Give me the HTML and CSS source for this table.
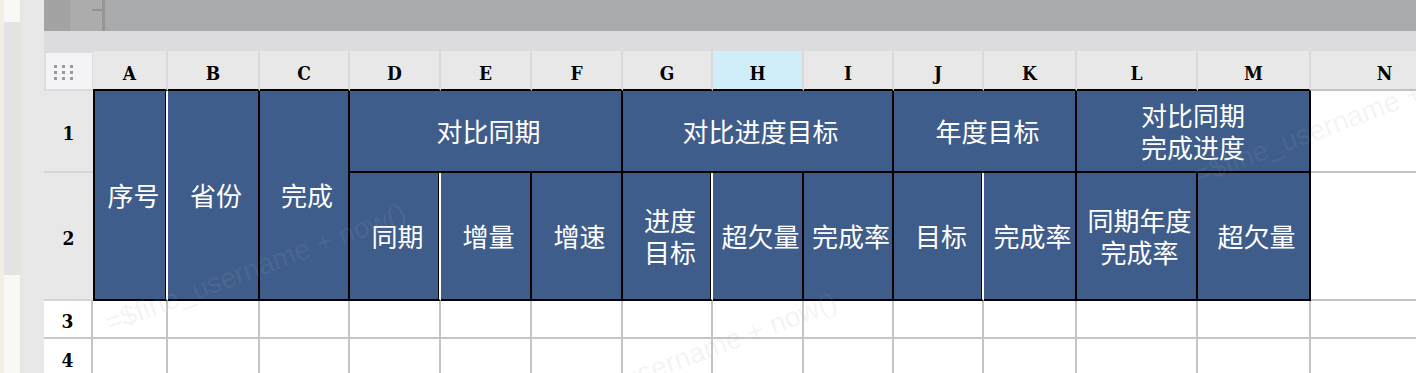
FILE: index.html
```html
<!DOCTYPE html>
<html lang="zh">
<head>
<meta charset="utf-8">
<title>Sheet</title>
<link rel="stylesheet" href="styles.css">
</head>
<body>
<div class="app">
  <div class="lpanel">
    <div class="lp-edge"></div>
    <div class="lp-track"><div class="lp-top"></div><div class="lp-mid"></div><div class="lp-bot"></div></div>
    <div class="lp-edge2"></div>
  </div>
  <div class="gutter"></div>
  <div class="main">
    <div class="topbar">
      <div class="tb-a"></div>
      <div class="tb-b"><span class="tick"></span></div>
      <div class="tb-line"></div>
      <div class="tb-rest"></div>
    </div>
    <div class="band"></div>
    <div class="sheet">
      <div class="grid">
        <!-- column header row -->
        <div class="corner"><div class="corner-in"><svg width="19" height="15" viewBox="0 0 19 15"><g fill="#9a9a9a"><rect x="0" y="0" width="3" height="3"/><rect x="8" y="0" width="3" height="3"/><rect x="16" y="0" width="3" height="3"/><rect x="0" y="6" width="3" height="3"/><rect x="8" y="6" width="3" height="3"/><rect x="16" y="6" width="3" height="3"/><rect x="0" y="12" width="3" height="3"/><rect x="8" y="12" width="3" height="3"/><rect x="16" y="12" width="3" height="3"/></g></svg></div></div>
        <div class="hc">A</div>
        <div class="hc">B</div>
        <div class="hc">C</div>
        <div class="hc">D</div>
        <div class="hc">E</div>
        <div class="hc">F</div>
        <div class="hc">G</div>
        <div class="hc sel">H</div>
        <div class="hc">I</div>
        <div class="hc">J</div>
        <div class="hc">K</div>
        <div class="hc">L</div>
        <div class="hc">M</div>
        <div class="hc n">N</div>

        <!-- row 1 -->
        <div class="rh f r1">1</div>
        <div class="b l wr rs2">序号</div>
        <div class="b rs2">省份</div>
        <div class="b rs2">完成</div>
        <div class="b cs3">对比同期</div>
        <div class="b cs3">对比进度目标</div>
        <div class="b cs2">年度目标</div>
        <div class="b cs2 tall"><span class="ln">对比同期</span><span class="ln">完成进度</span></div>
        <div class="e"></div>

        <!-- row 2 -->
        <div class="rh f r2">2</div>
        <div class="b wr">同期</div>
        <div class="b">增量</div>
        <div class="b">增速</div>
        <div class="b wr"><span class="ln">进度</span><span class="ln">目标</span></div>
        <div class="b">超欠量</div>
        <div class="b">完成率</div>
        <div class="b wr">目标</div>
        <div class="b">完成率</div>
        <div class="b"><span class="ln">同期年度</span><span class="ln">完成率</span></div>
        <div class="b">超欠量</div>
        <div class="e"></div>

        <!-- row 3 -->
        <div class="rh w">3</div>
        <div class="e"></div><div class="e"></div><div class="e"></div><div class="e"></div><div class="e"></div>
        <div class="e"></div><div class="e"></div><div class="e"></div><div class="e"></div><div class="e"></div>
        <div class="e"></div><div class="e"></div><div class="e"></div><div class="e"></div>

        <!-- row 4 -->
        <div class="rh w">4</div>
        <div class="e"></div><div class="e"></div><div class="e"></div><div class="e"></div><div class="e"></div>
        <div class="e"></div><div class="e"></div><div class="e"></div><div class="e"></div><div class="e"></div>
        <div class="e"></div><div class="e"></div><div class="e"></div><div class="e"></div>
      </div>
      <div class="wm wm1">=$fine_username + now()</div>
      <div class="wm wm2">=$fine_username + now()</div>
      <div class="wm wm3">=$fine_username + now()</div>
    </div>
  </div>
</div>
</body>
</html>
```
FILE: styles.css
```css
html, body {
  margin: 0;
  padding: 0;
  width: 1416px;
  height: 373px;
  overflow: hidden;
  background: #e8e8e8;
}

.app {
  display: flex;
  width: 1416px;
  height: 373px;
  overflow: hidden;
}

/* left panel */
.lpanel {
  width: 22px;
  flex: none;
  display: flex;
}
.lp-edge { width: 4px; background: #f3efe5; }
.lp-track {
  width: 16px;
  display: flex;
  flex-direction: column;
  background: #e3e3e3;
}
.lp-top { height: 22px; background: #f8f8f6; }
.lp-mid { flex: 1; }
.lp-bot { height: 98px; background: #f8f8f6; }
.lp-edge2 { width: 2px; background: #ece6d4; }

.gutter {
  width: 22px;
  flex: none;
  background: #e8e8e8;
}

.main {
  flex: 1;
  min-width: 0;
  display: flex;
  flex-direction: column;
  overflow: hidden;
}

/* top dark bar */
.topbar {
  height: 31px;
  flex: none;
  display: flex;
}
.tb-a { width: 26px; background: #a3a3a3; }
.tb-b {
  width: 32px;
  background: #acacac;
  display: flex;
  justify-content: flex-end;
  align-items: flex-start;
}
.tick {
  display: block;
  width: 10px;
  height: 2px;
  margin-top: 9px;
  background: #939393;
}
.tb-line { width: 3px; background: #959595; }
.tb-rest { flex: 1; background: #a9aaab; }

.band {
  height: 20px;
  flex: none;
  background: #dcdcde;
}

/* sheet */
.sheet {
  position: relative;
  flex: 1;
  overflow: hidden;
}

.grid {
  display: grid;
  grid-template-columns: 49px 75px 92px 90px 91px 91px 91px 90px 91px 90px 90px 93px 121px 113px 149px;
  grid-template-rows: 40px 82px 128px 38px 39px;
  width: 1416px;
}

.grid > div {
  box-sizing: border-box;
}

.corner {
  background: #dcdcde;
  padding: 2px 1px 2px 2px;
}
.corner-in {
  height: 100%;
  box-sizing: border-box;
  background: #f4f4f6;
  padding: 12px 0 0 8px;
}
.corner-in svg { display: block; }

.hc {
  background: #e8e8e8;
  border-right: 2px solid #d9d9dd;
  border-bottom: 2px solid #000;
  display: flex;
  align-items: center;
  justify-content: center;
  padding-top: 5px;
  font-family: "DejaVu Serif", "Liberation Serif", serif;
  font-stretch: condensed;
  font-weight: bold;
  font-size: 19px;
  color: #000;
}
.hc.sel { background: #d0eefa; }
.hc.n { border-bottom-color: #c4c4c4; }

.rh {
  display: flex;
  align-items: center;
  justify-content: center;
  padding-top: 4px;
  font-family: "DejaVu Serif", "Liberation Serif", serif;
  font-stretch: condensed;
  font-weight: bold;
  font-size: 19px;
  color: #000;
}
.rh.f {
  background: #e8e8e8;
  border-bottom: 2px solid #d6d6da;
}
.rh.r2 { border-bottom-color: #d2d2d8; }
.rh.w {
  background: #fff;
  border-right: 2px solid #c4c4c4;
  border-bottom: 2px solid #c8c8cc;
}

.b {
  background: #3f5d8a;
  border-right: 2px solid #000;
  border-bottom: 2px solid #000;
  color: #fff;
  font-family: "Noto Sans CJK SC", "Noto Sans", sans-serif;
  font-size: 26px;
  line-height: 32px;
  white-space: nowrap;
  display: flex;
  flex-direction: column;
  align-items: center;
  justify-content: center;
  text-align: center;
  padding-left: 6px;
}
.b .ln {
  display: block;
  height: 32px;
}
.b.l { border-left: 2px solid #000; }
.b.wr {
  border-right-color: #fff;
  box-shadow: inset -1px 0 0 #000;
}
.b.tall { padding-left: 0; }

.rs2 { grid-row: span 2; }
.cs2 { grid-column: span 2; }
.cs3 { grid-column: span 3; }

.e {
  background: #fff;
  border-right: 2px solid #c4c4c4;
  border-bottom: 2px solid #c4c4c4;
}

/* watermark */
.wm {
  position: absolute;
  font-family: "Liberation Sans", Arial, sans-serif;
  font-size: 28px;
  line-height: 34px;
  white-space: nowrap;
  color: rgba(165, 165, 180, 0.13);
  transform: rotate(-20.5deg);
  transform-origin: 0 50%;
  pointer-events: none;
}
.wm1 { left: 62px; top: 256px; }
.wm2 { left: 493px; top: 345px; }
.wm3 { left: 1151px; top: 108px; }
```
